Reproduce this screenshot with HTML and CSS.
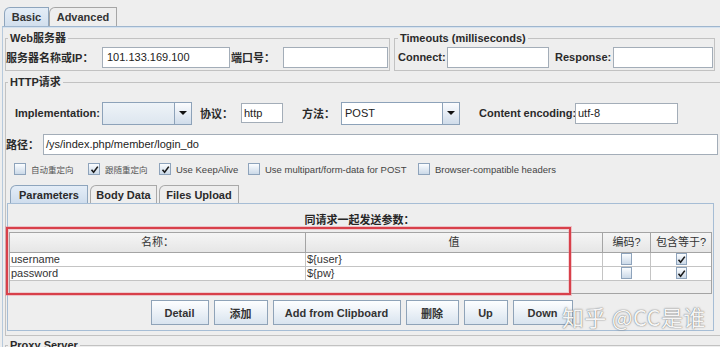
FILE: index.html
```html
<!DOCTYPE html>
<html>
<head>
<meta charset="utf-8">
<link rel="stylesheet" href="styles.css">
</head>
<body>
<div class="tabbar">
  <div class="tab sel basic">Basic</div>
  <div class="tab adv">Advanced</div>
</div>
<div class="main">
  <div class="toprow">
    <fieldset class="grp web">
      <legend>Web服务器</legend>
      <div class="row">
        <span class="lbl l-host">服务器名称或IP：</span>
        <div class="input w-host pad4">101.133.169.100</div>
        <span class="lbl l-port">端口号：</span>
        <div class="input w-port"></div>
      </div>
    </fieldset>
    <fieldset class="grp timeouts">
      <legend>Timeouts (milliseconds)</legend>
      <div class="row">
        <span class="lbl l-conn">Connect:</span>
        <div class="input w-conn"></div>
        <span class="lbl l-resp">Response:</span>
        <div class="input w-resp"></div>
      </div>
    </fieldset>
  </div>
  <fieldset class="grp http">
    <legend>HTTP请求</legend>
    <div class="row impl">
      <span class="lbl l-impl">Implementation:</span>
      <div class="combo w-impl"><div class="val empty"></div><div class="arrow"><span class="tri"></span></div></div>
      <span class="lbl l-proto">协议：</span>
      <div class="input w-proto">http</div>
      <span class="lbl l-meth">方法：</span>
      <div class="combo w-meth"><div class="val">POST</div><div class="arrow"><span class="tri"></span></div></div>
      <span class="lbl l-enc">Content encoding:</span>
      <div class="input w-enc">utf-8</div>
    </div>
    <div class="row path">
      <span class="lbl l-path">路径：</span>
      <div class="input w-path">/ys/index.php/member/login_do</div>
    </div>
    <div class="row checks">
      <div class="chk c1"><span class="cb"></span><span class="ct cjk">自动重定向</span></div>
      <div class="chk c2"><span class="cb"><svg viewBox="0 0 9 9" width="9" height="9"><path d="M1.5 4.8 L3.6 7.3 L7.8 1.6" fill="none" stroke="#1a1a1a" stroke-width="1.6"/></svg></span><span class="ct cjk">跟随重定向</span></div>
      <div class="chk c3"><span class="cb"><svg viewBox="0 0 9 9" width="9" height="9"><path d="M1.5 4.8 L3.6 7.3 L7.8 1.6" fill="none" stroke="#1a1a1a" stroke-width="1.6"/></svg></span><span class="ct">Use KeepAlive</span></div>
      <div class="chk c4"><span class="cb"></span><span class="ct">Use multipart/form-data for POST</span></div>
      <div class="chk c5"><span class="cb"></span><span class="ct">Browser-compatible headers</span></div>
    </div>
    <div class="subtabs">
      <div class="stab sel s1">Parameters</div>
      <div class="stab s2">Body Data</div>
      <div class="stab s3">Files Upload</div>
    </div>
    <div class="subpanel">
      <div class="ptitle">同请求一起发送参数：</div>
      <div class="tbl">
        <div class="th">名称：</div>
        <div class="th">值</div>
        <div class="th">编码?</div>
        <div class="th last">包含等于?</div>
        <div class="td">username</div>
        <div class="td">${user}</div>
        <div class="td ctr"><span class="cb"></span></div>
        <div class="td ctr last"><span class="cb"><svg viewBox="0 0 9 9" width="9" height="9"><path d="M1.5 4.8 L3.6 7.3 L7.8 1.6" fill="none" stroke="#1a1a1a" stroke-width="1.6"/></svg></span></div>
        <div class="td">password</div>
        <div class="td">${pw}</div>
        <div class="td ctr"><span class="cb"></span></div>
        <div class="td ctr last"><span class="cb"><svg viewBox="0 0 9 9" width="9" height="9"><path d="M1.5 4.8 L3.6 7.3 L7.8 1.6" fill="none" stroke="#1a1a1a" stroke-width="1.6"/></svg></span></div>
      </div>
      <div class="buttons">
        <button class="btn b-detail">Detail</button>
        <button class="btn b-add">添加</button>
        <button class="btn b-clip">Add from Clipboard</button>
        <button class="btn b-del">删除</button>
        <button class="btn b-up">Up</button>
        <button class="btn b-down">Down</button>
      </div>
      <div class="redbox"></div>
    </div>
  </fieldset>
  <fieldset class="grp proxy">
    <legend>Proxy Server</legend>
  </fieldset>
</div>
<div class="watermark">知乎 @CC是谁</div>
</body>
</html>
```

FILE: styles.css
```css
* { box-sizing: border-box; }
html, body { margin: 0; padding: 0; }
body {
  width: 720px;
  height: 347px;
  overflow: hidden;
  background: #eeeeee;
  font-family: "Liberation Sans", "Noto Sans CJK SC", sans-serif;
  font-size: 11px;
  color: #262626;
  position: relative;
}

/* top tabs */
.tabbar { display: flex; padding: 7px 0 0 4px; height: 26px; }
.tab {
  height: 19px;
  border: 1px solid #a6a6a6;
  border-bottom: none;
  border-top-left-radius: 6px;
  font-weight: bold;
  display: flex;
  align-items: center;
  justify-content: center;
  background: #eeeeee;
  color: #333;
}
.tab.sel { background: linear-gradient(#e4edf7, #d2dfed); border-color: #8ea5bd; }
.tab.basic { width: 45px; }
.tab.adv { width: 68px; }

.main {
  margin-left: 2px;
  border-top: 1px solid #9fb6ce;
  border-left: 1px solid #b6c9dc;
  box-shadow: inset 0 1px 0 #d5e2ef;
  padding: 5px 0 0 2px;
  height: 321px;
}

/* group boxes */
fieldset.grp { margin: 0; padding: 0; border: 1px solid #c2c2c2; min-width: 0; }
fieldset.grp legend {
  padding: 0 2px;
  margin-left: 2px;
  font-weight: bold;
  line-height: 13px;
  height: 13px;
  color: #2a2a2a;
}
.toprow { display: flex; gap: 4px; width: 710px; }
fieldset.web { width: 385px; padding: 1px 0 2px 0; }
fieldset.timeouts { width: 321px; padding: 1px 0 2px 1px; }

.row { display: flex; align-items: center; height: 22px; }
.lbl { font-weight: bold; white-space: nowrap; color: #2a2a2a; }
.input {
  height: 21px;
  border: 1px solid #a3adb8;
  background: #fff;
  padding-left: 3px;
  line-height: 19px;
  white-space: nowrap;
  overflow: hidden;
  color: #222;
}
.pad4 { padding-left: 4px; }

.l-host { width: 96px; }
.w-host { width: 128px; }
.l-port { width: 53px; padding-left: 1px; }
.w-port { width: 105px; }
.l-conn { width: 49px; margin-left: 2px; }
.w-conn { width: 102px; }
.l-resp { width: 58px; margin-left: 6px; }
.w-resp { width: 100px; }

fieldset.http { width: 718px; margin-top: 5px; padding: 0 0 4px 0; }
.impl { margin-top: 12px; height: 24px; padding-left: 9px; }
.l-impl { width: 87px; }
.w-impl { width: 90px; }
.l-proto { width: 41px; margin-left: 8px; }
.w-proto { width: 42px; height: 20px; padding-left: 2px; }
.l-meth { width: 39px; margin-left: 19px; }
.w-meth { width: 119px; }
.l-enc { width: 96px; margin-left: 19px; }
.w-enc { width: 103px; padding-left: 2px; }

.combo { display: flex; height: 23px; border: 1px solid #8da2b9; background: #fff; }
.combo .val { flex: 1; padding-left: 3px; line-height: 21px; color: #222; }
.combo .val.empty { background: linear-gradient(#eef3f8, #dde6ef); }
.combo .arrow {
  width: 17px;
  border-left: 1px solid #8da2b9;
  background: linear-gradient(#fbfcfe, #d0dcea);
  display: flex;
  align-items: center;
  justify-content: center;
}
.tri { width: 0; height: 0; border-left: 4px solid transparent; border-right: 4px solid transparent; border-top: 4px solid #111; }

.path { margin-top: 8px; }
.l-path { width: 37px; }
.w-path { width: 675px; flex: none; padding-left: 2px; }

.checks { margin-top: 6px; height: 16px; padding-left: 8px; }
.chk { display: flex; align-items: center; font-size: 9.5px; color: #444; }
.chk .ct { margin-left: 5px; white-space: nowrap; }
.chk .ct.cjk { font-size: 8.5px; color: #555; }
.c1 { width: 74px; }
.c2 { width: 71px; }
.c3 { width: 89px; }
.c4 { width: 170px; }

.cb {
  display: inline-flex;
  align-items: center;
  justify-content: center;
  width: 12px;
  height: 12px;
  border: 1px solid #8ea3bb;
  background: linear-gradient(#fbfdff, #cbd9e8);
}
.cb svg { display: block; margin-top: 1px; }

/* sub tabs */
.subtabs { display: flex; margin: 8px 0 0 1px; padding-left: 3px; height: 18px; align-items: flex-end; }
.stab {
  height: 18px;
  border: 1px solid #a9a9a9;
  border-bottom: none;
  border-top-left-radius: 6px;
  font-weight: bold;
  display: flex;
  align-items: center;
  justify-content: center;
  color: #2a2a2a;
  background: #eeeeee;
}
.stab.sel { background: linear-gradient(#e4edf7, #cfdded); border-color: #8ea5bd; }
.s1 { width: 78px; }
.s2 { width: 67px; margin-left: 2px; }
.s3 { width: 80px; margin-left: 2px; }

.subpanel {
  position: relative;
  width: 707px;
  margin: 0 0 0 1px;
  height: 128px;
  border: 1px solid #a6bdd5;
  background: #eeeeee;
}
.ptitle { margin-top: 10px; line-height: 13px; text-align: center; font-weight: bold; padding-right: 2px; }

.tbl {
  margin: 5px 1px 0 1px;
  height: 62px;
  border: 1px solid #a4a4a4;
  display: grid;
  grid-template-columns: 296px 297px 48px 60px;
  grid-auto-rows: min-content;
  align-content: start;
  background: #eeeeee;
}
.th {
  height: 20px;
  line-height: 19px;
  text-align: center;
  border-right: 1px solid #a4a4a4;
  border-bottom: 1px solid #a4a4a4;
  background: linear-gradient(#f5f5f5, #e6e6e6);
  color: #333;
}
.td {
  height: 14px;
  line-height: 13px;
  padding-left: 1px;
  background: #fff;
  border-right: 1px solid #c4c4c4;
  border-bottom: 1px solid #c4c4c4;
  color: #333;
  white-space: nowrap;
}
.td.ctr { display: flex; align-items: center; justify-content: center; padding: 0; }
.td .cb { width: 11px; height: 12px; margin-top: -1px; }
.last { border-right: none; }

.buttons { display: flex; justify-content: center; gap: 5px; margin-top: 6px; padding-left: 2px; }
.btn {
  height: 25px;
  border: 1px solid #8fa3b8;
  background: linear-gradient(#fdfeff, #d9e4ef);
  font-family: "Liberation Sans", "Noto Sans CJK SC", sans-serif;
  font-weight: bold;
  font-size: 11px;
  color: #333;
  padding: 0;
  border-radius: 0;
}
.b-detail { width: 58px; }
.b-add { width: 54px; }
.b-clip { width: 128px; }
.b-del { width: 53px; }
.b-up { width: 44px; }
.b-down { width: 60px; }

.redbox {
  position: absolute;
  left: -2px;
  top: 23px;
  width: 565px;
  height: 68px;
  border: 2px solid #d8404a;
  box-shadow: 0 0 0 1px rgba(232, 140, 150, 0.45), inset 0 0 0 1px rgba(232, 140, 150, 0.35);
  pointer-events: none;
}

fieldset.proxy { width: 718px; margin-top: 3px; height: 20px; }

.watermark {
  position: absolute;
  left: 562px;
  top: 302px;
  font-family: "Noto Sans CJK SC", sans-serif;
  font-size: 22px;
  line-height: 28px;
  letter-spacing: 0.3px;
  color: rgba(255, 255, 255, 0.95);
  text-shadow: 0 0 1px rgba(70, 70, 70, 0.8), 0 0 2px rgba(110, 110, 110, 0.5);
  white-space: nowrap;
}
```
